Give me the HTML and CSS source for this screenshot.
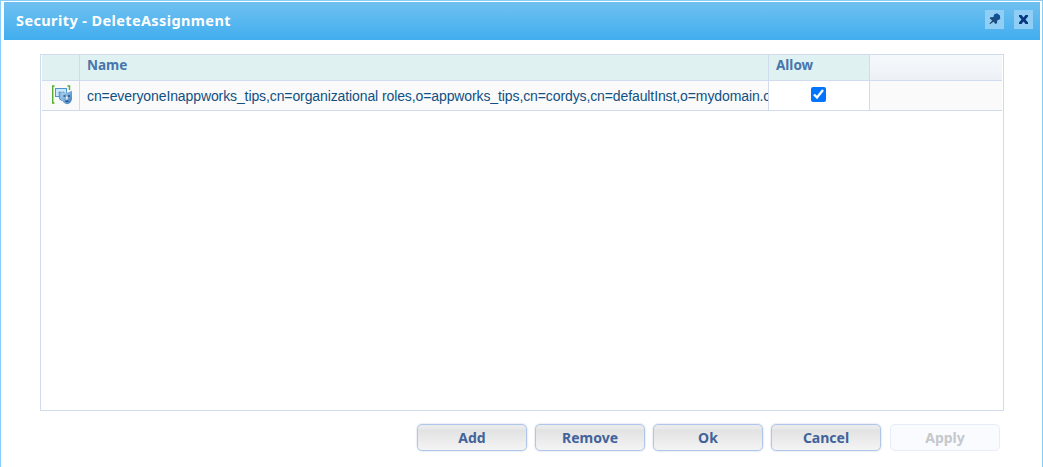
FILE: index.html
```html
<!DOCTYPE html>
<html lang="en">
<head>
<meta charset="utf-8">
<title>Security - DeleteAssignment</title>
<link rel="stylesheet" href="styles.css">
</head>
<body>
<div class="dialog">
  <header class="titlebar">
    <h1 class="title">Security - DeleteAssignment</h1>
    <button class="tool" aria-label="Pin">
      <svg width="19" height="19" viewBox="0 0 19 19"><defs><linearGradient id="pin" x1="1" y1="0" x2="0" y2="1"><stop offset="0" stop-color="#0752a5"/><stop offset="1" stop-color="#294b68"/></linearGradient></defs><path fill="url(#pin)" d="M9 4.5 12 3.2 15 5.5 15.2 9 12.2 10.5 12 13.3 10.5 14 8.5 11.8 5 14.2 4.5 13.5 7.2 10.5 4.8 8.5 5.2 7.2 8.5 7Z"/></svg>
    </button>
    <button class="tool" aria-label="Close">
      <svg width="19" height="19" viewBox="0 0 19 19"><path fill="#07377f" d="M5 5H7.5L9.5 7.5 11.5 5H14V6.5L11.5 9.5 14 12.5V14H11.5L9.5 11.5 7.5 14H5V12.5L7.5 9.5 5 6.5Z"/></svg>
    </button>
  </header>
  <main class="grid">
    <div class="row head">
      <div class="cell"></div><div class="cell">Name</div><div class="cell">Allow</div><div class="cell filler"></div>
    </div>
    <div class="row item">
      <div class="cell icon">
        <svg width="20" height="20" viewBox="0 0 20 20"><defs><linearGradient id="mask" x1="0" y1="0" x2="1" y2="1"><stop offset="0" stop-color="#b7dcf6"/><stop offset="1" stop-color="#3475b5"/></linearGradient></defs><path d="M2.5 1H.7V18H2.5M15.5 1H17.5V5" fill="none" stroke="#51ad2b" stroke-width="1.4"/><rect x="3.5" y="3.5" width="11" height="8" fill="#c8e7fa" stroke="#4b94d5"/><path d="M7 7Q10 8 12 7V14Q10 17 7.5 14Z" fill="#8abce6" stroke="#4384bf" stroke-width=".8"/><path d="M9.8 7Q13 8.5 15 7.5 18 7 20 5.5V14Q19 18.8 15 19.2 10.5 18.5 9.8 14Z" fill="url(#mask)"/><path d="M11.5 11H13.5M16 11H18" fill="none" stroke="#245280" stroke-width="1.5"/><path d="M13.3 16.2H16.5" stroke="#245280" stroke-width="1.4"/><path d="M14.8 11.5V14.5" stroke="#e5f4ff" stroke-width="1.6"/></svg>
      </div>
      <div class="cell name">cn=everyoneInappworks_tips,cn=organizational roles,o=appworks_tips,cn=cordys,cn=defaultInst,o=mydomain.com</div>
      <div class="cell allow"><input class="check" type="checkbox" checked aria-label="Allow"></div>
      <div class="cell filler"></div>
    </div>
  </main>
  <footer class="actions">
    <button class="btn">Add</button><button class="btn">Remove</button><button class="btn">Ok</button><button class="btn">Cancel</button><button class="btn disabled" disabled>Apply</button>
  </footer>
</div>
</body>
</html>
```
FILE: styles.css
```css
* { box-sizing: border-box; }
body { margin: 0; overflow: hidden; background: #fff; }
.dialog {
  height: 467px;
  padding: 1px 2px 0 3px;
  border: 1px solid #87cefa;
  border-bottom: 0;
  font-family: "Noto Sans", Tahoma, sans-serif;
}
.titlebar {
  display: flex;
  align-items: center;
  gap: 10px;
  height: 38px;
  padding: 0 7px 3px 12px;
  background: linear-gradient(#70c0f0, #41aeee);
}
.title { flex: 1; margin: 0; color: #fff; font-size: 14.5px; line-height: 20px; font-weight: 700; letter-spacing: .39px; }
.tool { width: 19px; height: 19px; padding: 0; border: 0; background: #91cef5; }
.tool svg { display: block; }
.grid {
  width: 964px;
  height: 357px;
  margin: 14px 0 0 36px;
  padding: 0 1px;
  border: 1px solid #d0dced;
}
.row { display: grid; grid-template-columns: 38px 689px 101px 132px; }
.cell { min-width: 0; border-right: 1px solid #d0dced; border-bottom: 1px solid #d0dced; }
.head .cell { height: 26px; padding-left: 7px; background: #dff1f1; color: #4775ad; font-size: 13.5px; font-weight: 700; line-height: 20px; }
.head .filler { background: linear-gradient(#f6f9fc, #edf1f6); }
.item .cell { height: 30px; background: #fafafa; }
.row .filler { border-right: 0; }
.item .icon { padding: 4px 0 0 10px; }
.icon svg { display: block; }
.item .name { padding-left: 7px; overflow: hidden; white-space: nowrap; color: #105083; font: 14px/30px "Liberation Sans", Arial, sans-serif; letter-spacing: -.105px; }
.item .allow { display: flex; justify-content: center; background: #fff; }
.check { width: 15px; height: 15px; margin: 6px 1px 0 0; }
.actions { display: flex; gap: 8px; margin: 13px 0 0 413px; }
.btn {
  width: 110px;
  height: 27px;
  padding: 1px 0 0;
  border: 1px solid #aec6e9;
  border-radius: 5px;
  background: linear-gradient(#ececec 0, #e9e9e9 15%, #e2e2e2 20%, #f4f4f4 100%);
  box-shadow: 0 0 2px #bdc9dc;
  color: #41639a;
  font: 700 14px/20px "Noto Sans", Tahoma, sans-serif;
}
.disabled { margin-left: 1px; border-color: #e6edf6; background: #fafbff; box-shadow: none; color: #c5c8cc; }
```
